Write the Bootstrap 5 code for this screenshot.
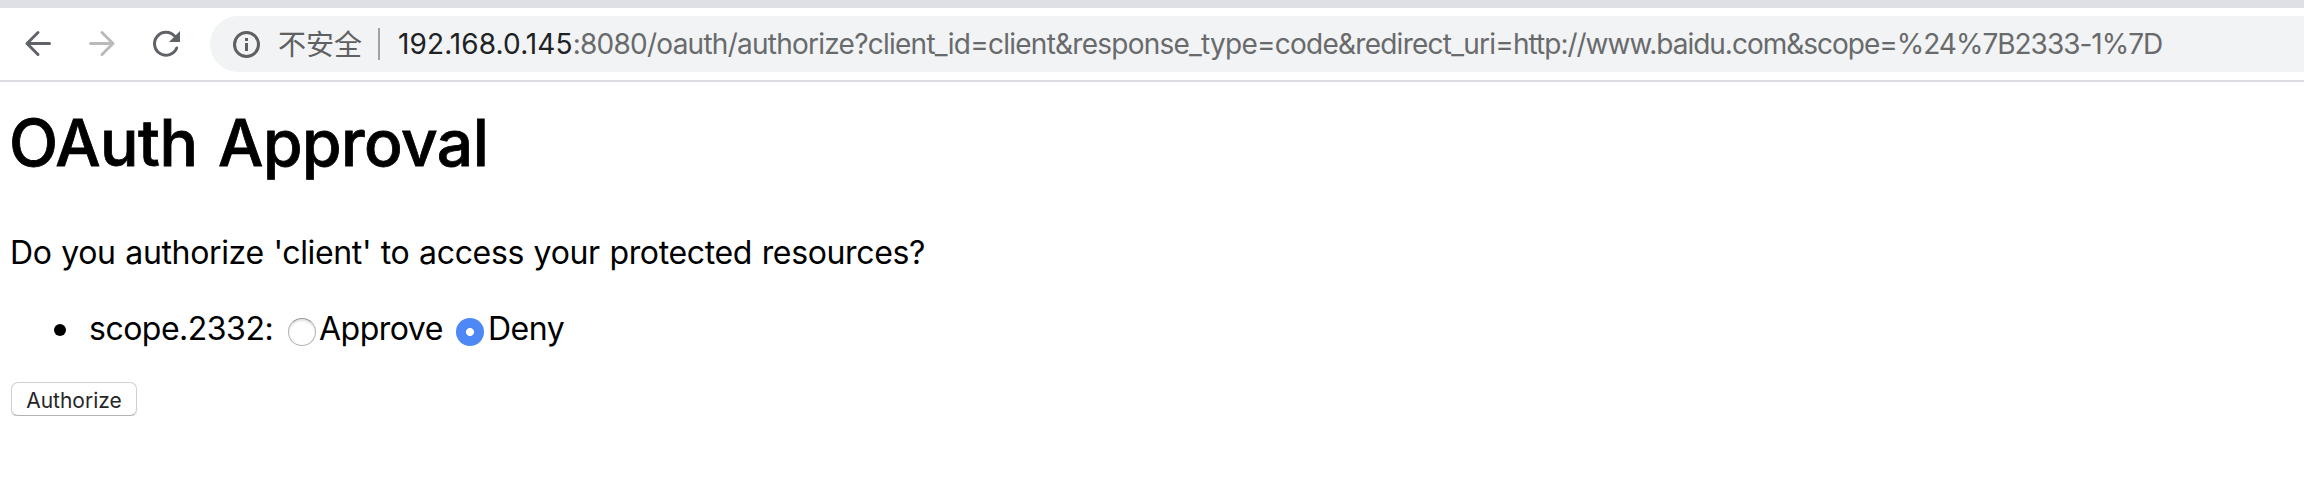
<!DOCTYPE html>
<html lang="zh-CN">
<head>
<meta charset="utf-8">
<title>OAuth Approval</title>
<link href="https://cdn.jsdelivr.net/npm/bootstrap@5.3.0/dist/css/bootstrap.min.css" rel="stylesheet">
<style>
body{font-family:Inter,"Noto Sans CJK SC",sans-serif;color:#000;background:#fff;overflow:hidden}
.tabstrip{height:8px;background:#dfe0e5}
.toolbar{height:74px;border-bottom:2px solid #dcdce2;padding-left:18px}
.tool{width:40px;height:40px;flex:none;color:#5f6368;border:0;padding:0;background:none;margin-right:24px}
.tool svg,.info{display:block}
.tool.off{color:#bababa}
.omnibox{height:56px;border-radius:28px 0 0 28px;background:#f1f3f4;font-size:28px;line-height:56px;color:#696a6c;padding-left:22px}
.info{color:#5f6062}
.unsafe{font-family:"Noto Sans CJK SC",sans-serif;color:#5f6062;margin-left:16px;width:85px;line-height:54px;height:56px}
.sep{width:2px;height:32px;background:#a0a1a3;margin:0 18px 0 15px}
.host{color:#202124;letter-spacing:.1px}
.rest{letter-spacing:-.75px}
.target{letter-spacing:-1.01px}
.doc{padding:0 10px;font-size:32px;line-height:44px;letter-spacing:-.35px}
h1{font-size:64px;font-weight:500;-webkit-text-stroke:.8px #000;line-height:90px;margin:16px 0 43px -1px;letter-spacing:-.5px;word-spacing:4px}
.ask{word-spacing:1px;margin-bottom:32px}
.scopes{margin:0 0 31px;padding-left:79px;letter-spacing:-.5px;height:44px}
.bullet{width:12px;height:12px;border-radius:50%;background:#000;margin:2px 23px 0 -35px}
.choice{appearance:none;width:28px;height:28px;border-radius:50%;border:1.5px solid #b4b4b4;border-top-color:#979797;background:#fff;box-shadow:inset 0 2px 2px #e4e4e4;margin:5px 3px 0 0;flex:none}
.choice:checked{border:0;background:radial-gradient(circle,#fff 3.6px,#4d88f5 4.4px);box-shadow:none;margin-right:4px}
.go{width:126px;height:34px;border:1.5px solid #d0d0d0;border-bottom-color:#b4b4b4;border-radius:7px;background:#fff;box-shadow:0 1px 1px #ddd;font-size:21px;line-height:1;color:#262626;padding:2px 0 0;letter-spacing:0;margin-left:1px;display:block}
</style>
</head>
<body>
<div class="tabstrip"></div>
<nav class="toolbar d-flex align-items-center">
<button class="tool" aria-label="Back"><svg width="40" height="40" fill="none" stroke="currentColor" stroke-width="3" stroke-linecap="round" stroke-linejoin="round"><path d="M31.5 19.5H9M20 8.500L9 19.500L20 30.500"/></svg></button>
<button class="tool off" aria-label="Forward"><svg width="40" height="40" fill="none" stroke="currentColor" stroke-width="3" stroke-linecap="round" stroke-linejoin="round"><path d="M8.500 19.500H31M20 8.500L31 19.500L20 30.500"/></svg></button>
<button class="tool" aria-label="Reload"><svg width="40" height="40" fill="none" stroke="currentColor" stroke-width="3" stroke-linecap="round"><path d="M28.900 12.400A11.500 11.500 0 1 0 30.700 24"/><path d="M34 7v11H23z" fill="currentColor" stroke="none"/></svg></button>
<div class="omnibox flex-grow-1 d-flex align-items-center"><svg class="info flex-shrink-0" width="30" height="30" fill="none" stroke="currentColor" stroke-width="3"><circle cx="14.500" cy="15.500" r="12"/><path d="M14.500 14v8M14.500 9v3"/></svg><span class="unsafe">不安全</span><span class="sep"></span><span class="host">192.168.0.145</span><span class="rest">:8080/oauth/authorize?client_id=client&amp;response_type=code&amp;redirect_uri=<span class="target">http://www.baidu.com&amp;scope=%24%7B2333-1%7D</span></span></div>
</nav>
<main class="doc">
<h1>OAuth Approval</h1>
<p class="ask">Do you authorize 'client' to access your protected resources?</p>
<ul class="scopes list-unstyled d-flex align-items-center"><li class="d-flex align-items-center"><span class="bullet"></span><span style="width:199px">scope.2332:</span><label class="d-flex align-items-center" style="width:168px"><input class="choice" type="radio" name="s">Approve</label><label class="d-flex align-items-center"><input class="choice" type="radio" name="s" checked>Deny</label></li></ul>
<button class="go">Authorize</button>
</main>
</body>
</html>
